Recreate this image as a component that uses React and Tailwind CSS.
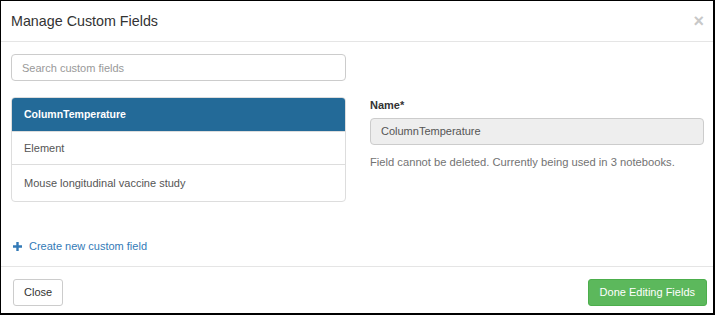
import React, { useState } from 'react';

const FIELDS = ['ColumnTemperature', 'Element', 'Mouse longitudinal vaccine study'];

export default function App() {
    const [selected, setSelected] = useState(0);
    const [search, setSearch] = useState('');

    return (
        <div
            className="flex h-[315px] w-[715px] flex-col border-t border-l border-r-2 border-b-2 border-black bg-white text-[#333]"
            style={{ fontFamily: '"Liberation Sans", Arial, sans-serif' }}
        >
            <div className="flex h-[41px] shrink-0 items-center justify-between border-b border-[#e5e5e5] pl-[10px] pr-[9px]">
                <h4 className="text-[14.3px] leading-none text-[#333]">Manage Custom Fields</h4>
                <button className="text-[18px] font-bold leading-none text-[#c8c8c8]">×</button>
            </div>

            <div className="flex flex-1 gap-[24px] px-[10px] pt-[12px]">
                <div className="flex w-[335px] shrink-0 flex-col">
                    <input
                        value={search}
                        onChange={(e) => setSearch(e.target.value)}
                        placeholder="Search custom fields"
                        className="h-[27px] rounded-[4px] border border-[#ccc] px-[10px] text-[11px] text-[#555] placeholder:text-[#999] outline-none"
                    />

                    <div className="mt-[16px] overflow-hidden rounded-[4px] border border-[#ddd]">
                        {FIELDS.map((field, index) => (
                            <button
                                key={field}
                                onClick={() => setSelected(index)}
                                className={
                                    index === selected
                                        ? 'flex h-[33px] w-full items-center bg-[#236a98] px-[12px] text-left text-[10.5px] font-bold text-white'
                                        : index === FIELDS.length - 1
                                          ? 'flex h-[37px] w-full items-center border-t border-[#ddd] px-[12px] text-left text-[11px] text-[#555]'
                                          : 'flex h-[33px] w-full items-center border-t border-[#ddd] px-[12px] text-left text-[11px] text-[#555]'
                                }
                            >
                                {field}
                            </button>
                        ))}
                    </div>

                    <a className="mt-[36px] flex items-center gap-[7px] pl-[2px] text-[11px] text-[#337ab7]" href="#">
                        {/* glyphicon-plus */}
                        <svg width="9" height="9" viewBox="0 0 9 9" className="shrink-0">
                            <path d="M3.3 0h2.4v3.3H9v2.4H5.7V9H3.3V5.7H0V3.3h3.3z" fill="currentColor" />
                        </svg>
                        Create new custom field
                    </a>
                </div>

                <div className="flex min-w-0 flex-1 flex-col pt-[43px]">
                    <label className="text-[11px] font-bold text-[#333]">Name*</label>
                    <input
                        disabled
                        value={FIELDS[selected]}
                        className="mt-[4px] h-[27px] w-[334px] rounded-[4px] border border-[#ccc] bg-[#eee] px-[10px] text-[11px] text-[#555]"
                    />
                    <p className="mt-[9px] text-[11.2px] text-[#737373]">
                        Field cannot be deleted. Currently being used in 3 notebooks.
                    </p>
                </div>
            </div>

            <div className="flex h-[47px] shrink-0 items-start justify-between border-t border-[#e5e5e5] pl-[12px] pr-[6px] pt-[12px]">
                <button className="h-[27px] rounded-[3px] border border-[#ccc] bg-white px-[10px] text-[11px] text-[#333]">
                    Close
                </button>
                <button className="h-[27px] rounded-[3px] border border-[#4cae4c] bg-[#5cb85c] px-[11px] text-[11px] text-white">
                    Done Editing Fields
                </button>
            </div>
        </div>
    );
}
